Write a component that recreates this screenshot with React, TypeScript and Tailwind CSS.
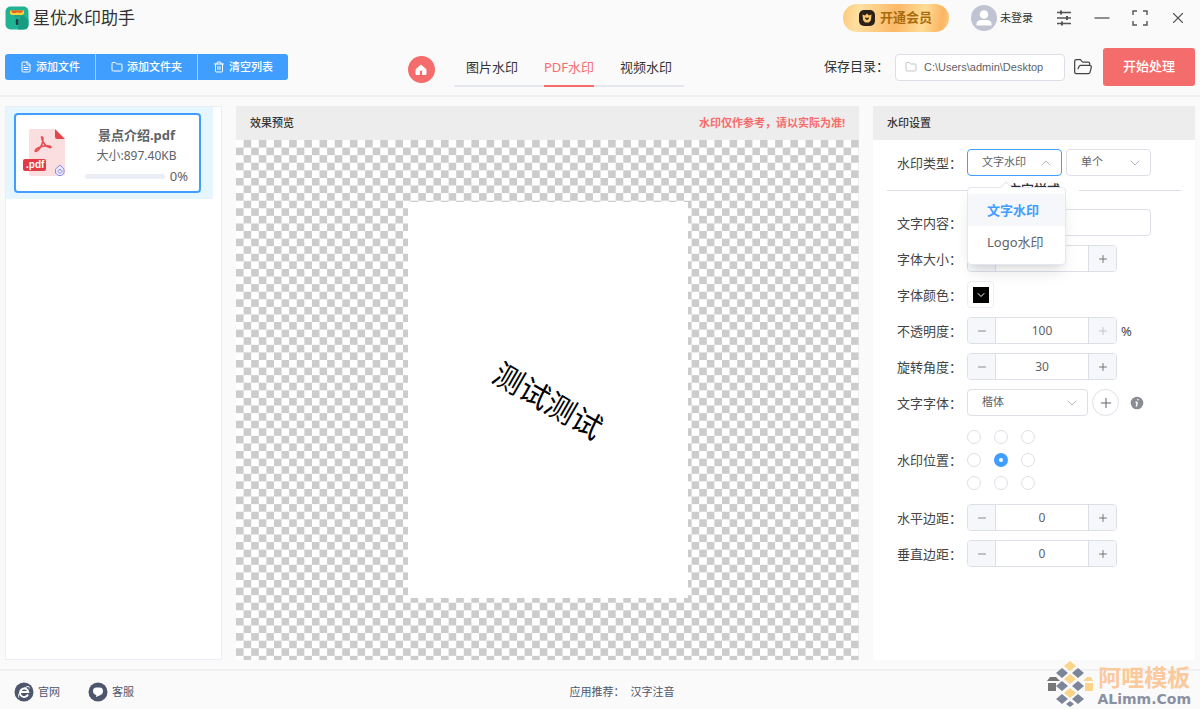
import { useState, type ReactNode } from "react";
import { ChevronDown, ChevronUp, FileText, Folder, FolderOpen, Minus, Plus, Trash2, X } from "lucide-react";
import clsx from "clsx";

function AppLogo() {
  return (
    <svg viewBox="0 0 24 24" className="h-6 w-6">
      <rect x="0.5" y="0.5" width="23" height="23" rx="5" fill="#1fb394" />
      <path d="M13 15l4-7 6.500 6v5a4.500 4.500 0 0 1-4.500 4.500h-6z" fill="#179c81" />
      <path d="M5 4.500h14v3l-1.500 1.500h-11L5 7.500z" fill="#f9d235" />
      <path d="M6 4.500h12l-1 2c-2 1-3-.5-5 0s-4 1-5 0z" fill="#ea5b2b" />
      <path d="M9 9h6l-1.500 2.500h-3z" fill="#2a9d84" />
      <rect x="10.800" y="13" width="2.400" height="6" rx="1" fill="#1d3c45" />
    </svg>
  );
}

function VipIcon() {
  return (
    <svg viewBox="0 0 18 18" className="h-[18px] w-[18px]">
      <rect x="1" y="1" width="16" height="16" rx="5" fill="#2b2118" />
      <path d="M4.500 5.500l2.500 1 2-2 2 2 2.500-1-.5 5.500-2 2.500H7L5 11z" fill="#fbc671" />
      <path d="M7.300 8.700L9 10.400l1.700-1.700" fill="none" stroke="#2b2118" strokeWidth="1.300" />
    </svg>
  );
}

function Avatar() {
  return (
    <svg viewBox="0 0 26 26" className="h-[26px] w-[26px]">
      <circle cx="13" cy="13" r="13" fill="#c0c4d2" />
      <circle cx="13" cy="9.500" r="4.300" fill="#fff" />
      <path d="M5.500 20.500v-1.500c0-3 3-4 4.500-4h6c1.500 0 4.500 1 4.500 4v1.500z" fill="#fff" />
    </svg>
  );
}

function SettingsIcon() {
  return (
    <svg viewBox="0 0 16 16" className="h-4 w-4" fill="none" stroke="#555" strokeWidth="1.300">
      <path d="M1 2.500h14M1 8h14M1 13.500h14" />
      <path d="M5 .5v4M11 6v4M6 11.500v4" strokeWidth="2" />
    </svg>
  );
}

function PdfIcon() {
  return (
    <svg viewBox="0 0 44 50" className="h-[50px] w-11">
      <path d="M8 1h23l11 11v34a2 2 0 0 1-2 2H8a2 2 0 0 1-2-2V3a2 2 0 0 1 2-2z" fill="#fbdfe0" />
      <path d="M32 1l10 10H34a2 2 0 0 1-2-2z" fill="#e8454b" />
      <path
        d="M18.500 9c2-.5 1.500 3 .5 7-1 3-4 7-6 7.500-1.500 0-1-2 2-3.500s8-2.500 11-2 2 2 .5 1.500C23 19 19 14 18.500 9z"
        fill="none"
        stroke="#ea4a50"
        strokeWidth="1.600"
      />
      <rect y="31" width="23" height="12" rx="2" fill="#e33b43" />
      <text x="3" y="40" fontSize="10" fontWeight="700" fill="#fff" fontFamily="Liberation Sans, sans-serif">.pdf</text>
      <path d="M37 37l4 4v4l-2.500 2.500h-3.500L32.500 45v-4z" fill="#e7e6fa" stroke="#8b8fe0" />
      <path d="M35 43.500l2-2.500 2 2.500-2 2z" fill="none" stroke="#8b8fe0" />
    </svg>
  );
}

function BrowserIcon() {
  return (
    <svg viewBox="0 0 20 20" className="h-5 w-5">
      <circle cx="10" cy="10" r="9.500" fill="#4d566d" />
      <path d="M14 12.500a4.200 4.200 0 1 1 .3-2.500H7" fill="none" stroke="#fff" strokeWidth="1.900" />
      <path d="M5 15.500c-2-1.500 2-9.500 9-11 1.500 0 1.500 1 1 2" fill="none" stroke="#fff" strokeWidth="1" />
    </svg>
  );
}

function ChatIcon() {
  return (
    <svg viewBox="0 0 20 20" className="h-5 w-5">
      <circle cx="10" cy="10" r="9.500" fill="#4d566d" />
      <path d="M8.500 5.500h3c2.500 0 3.500 1.500 3.500 3.500s-1 3.500-3.500 4.500L8 15l.3-2C6 12.500 5 11 5 9c0-2 1.200-3.500 3.500-3.500z" fill="#fff" />
    </svg>
  );
}

function SiteMark() {
  return (
    <svg viewBox="0 0 46 48" className="h-12 w-[46px]">
      <g fill="#fbd488">
        <path d="M23 0l6 5-6 5-6-5zM23 13l6 5-6 5-6-5zM23 27l6 5-6 5-6-5z" />
        <path d="M36 20l4-4h4l2 4zM38 22h8v8h-8z" />
      </g>
      <g fill="#7d8599">
        <path d="M15 7l6 5-6 5-6-5zM31 7l6 5-6 5-6-5zM15 20l6 5-6 5-6-5zM31 20l6 5-6 5-6-5zM15 33l6 5-6 5-6-5zM31 33l6 5-6 5-6-5zM23 40l4 3-4 3-4-3z" />
        <path d="M0 20l3-4h6l4 4z" fill="#777" />
        <path d="M1 22h8v8H1z" fill="#777" />
      </g>
    </svg>
  );
}

function Field({ label, htmlFor, children }: { label: string; htmlFor: string; children: ReactNode }) {
  return (
    <div className="flex items-center">
      <label htmlFor={htmlFor} className="w-[70px] shrink-0 whitespace-nowrap text-[13px] leading-5 text-[#444]">
        {label}
      </label>
      {children}
    </div>
  );
}

function NumberField({ id, value, max }: { id: string; value: number; max?: number }) {
  const [current, setCurrent] = useState(value);
  const atMax = max !== undefined && current >= max;

  return (
    <div className="flex h-[27px] w-[150px] overflow-hidden rounded border border-[#dcdfe6] bg-white">
      <button
        type="button"
        aria-label="减少"
        onClick={() => setCurrent(current - 1)}
        className="flex w-7 shrink-0 items-center justify-center border-r border-[#dcdfe6] bg-[#f5f7fa] text-[#888]"
      >
        <Minus className="h-3 w-3" strokeWidth={2} />
      </button>
      <input
        id={id}
        inputMode="numeric"
        value={current}
        onChange={(e) => setCurrent(Number(e.target.value) || 0)}
        className="w-full min-w-0 bg-white text-center text-[12px] text-[#606266] outline-none"
      />
      <button
        type="button"
        aria-label="增加"
        disabled={atMax}
        onClick={() => setCurrent(current + 1)}
        className={clsx(
          "flex w-7 shrink-0 items-center justify-center border-l border-[#dcdfe6] bg-[#f5f7fa]",
          atMax ? "text-[#c0c4cc]" : "text-[#777]"
        )}
      >
        <Plus className="h-3 w-3" strokeWidth={2} />
      </button>
    </div>
  );
}

const positions = ["左上", "中上", "右上", "左中", "居中", "右中", "左下", "中下", "右下"];

const fileActions = [
  { label: "添加文件", icon: FileText },
  { label: "添加文件夹", icon: Folder },
  { label: "清空列表", icon: Trash2 },
];

const tabs = ["图片水印", "PDF水印", "视频水印"];

const selectClass =
  "block h-[27px] w-full appearance-none rounded border bg-white pl-[14px] pr-6 text-[11px] text-[#606266] outline-none";

const chevronClass = "pointer-events-none absolute right-2 top-[6px] h-4 w-4 text-[#b4b8c0]";

function TitleBar() {
  return (
    <header className="flex h-9 items-center justify-between pl-[5px] pr-[13px]">
      <div className="flex items-center gap-1">
        <AppLogo />
        <h1 className="text-[17px] leading-6 text-[#333]">星优水印助手</h1>
      </div>
      <div className="flex items-center">
        <button
          type="button"
          className="flex h-7 w-[106px] items-center gap-1 rounded-full bg-[linear-gradient(100deg,#f9c97c,#ffe0a0_15%,#fbb868_50%,#ffdc95_75%,#fbb563_92%,#fdcb80)] pl-[15px] text-[13px] font-bold text-[#a96c0c]"
        >
          <VipIcon />
          开通会员
        </button>
        <button type="button" className="ml-[22px] flex items-center gap-[3px] text-[11px] text-[#333]">
          <Avatar />
          未登录
        </button>
        <div className="ml-[23px] flex items-center gap-[21px] text-[#555]">
          <button type="button" aria-label="设置"><SettingsIcon /></button>
          <button type="button" aria-label="最小化">
            <svg viewBox="0 0 18 18" className="h-[18px] w-[18px]" fill="none" stroke="currentColor" strokeWidth="1.300">
              <path d="M1.500 9h15" />
            </svg>
          </button>
          <button type="button" aria-label="最大化">
            <svg viewBox="0 0 16 16" className="h-4 w-4" fill="none" stroke="currentColor" strokeWidth="1.400">
              <path d="M1 5V1h4M11 1h4v4M15 11v4h-4M5 15H1v-4" />
            </svg>
          </button>
          <button type="button" aria-label="关闭"><X className="h-[18px] w-[18px]" strokeWidth={1.5} /></button>
        </div>
      </div>
    </header>
  );
}

function Toolbar() {
  return (
    <div className="flex h-[61px] items-start justify-between border-b-2 border-[#efefef] px-[5px] pt-3">
      <div className="mt-[6px] flex divide-x divide-[#a3d0ff] overflow-hidden rounded-[3px] bg-[#409eff]">
        {fileActions.map(({ label, icon: Icon }) => (
          <button key={label} type="button" className="flex h-[26px] items-center gap-1 px-[15px] text-[11px] font-medium text-white">
            <Icon className="h-3 w-3" />
            {label}
          </button>
        ))}
      </div>

      <nav className="flex pr-5">
        <a href="#home" aria-label="首页" className="mt-2 mr-[19px] flex h-[27px] w-[27px] items-center justify-center rounded-full bg-[#f56c6c]">
          <svg viewBox="0 0 12 12" className="h-3 w-3">
            <path d="M6 1l5 4.500v5H7.500v-3a1.500 1.500 0 0 0-3 0v3H1v-5z" fill="#fff" stroke="#fff" strokeLinejoin="round" />
          </svg>
        </a>
        <div className="flex h-[39px] gap-[26px] border-b-2 border-[#e4e7ed] px-3">
          {tabs.map((tab) => (
            <a
              key={tab}
              href="#tab"
              className={clsx(
                "h-[39px] border-b-2 text-[13px] leading-[38px]",
                tab === "PDF水印" ? "border-[#f56c6c] text-[#f56c6c]" : "border-transparent text-[#333]"
              )}
            >
              {tab}
            </a>
          ))}
        </div>
      </nav>

      <div className="flex items-center">
        <label htmlFor="save-dir" className="mr-[6px] text-[13px] text-[#333]">保存目录：</label>
        <div className="flex h-[27px] w-[170px] items-center gap-[7px] rounded border border-[#dcdfe6] bg-white pl-[9px]">
          <Folder className="h-3 w-3 shrink-0 text-[#c0c4cc]" />
          <input
            id="save-dir"
            defaultValue="C:\Users\admin\Desktop"
            className="w-full min-w-0 bg-transparent font-['Liberation_Sans',sans-serif] text-[11px] text-[#606266] outline-none"
          />
        </div>
        <button type="button" aria-label="打开目录" className="ml-2 mr-[10px] text-[#444]">
          <FolderOpen className="h-5 w-5" strokeWidth={1.5} />
        </button>
        <button type="button" className="h-[38px] w-[92px] rounded-[3px] bg-[#f56c6c] text-[13px] font-medium text-white">
          开始处理
        </button>
      </div>
    </div>
  );
}

function FileList() {
  return (
    <aside className="w-[217px] shrink-0 border border-[#ebeef5] bg-white">
      <div className="mr-2 bg-[#e6f6ff] py-[6px] pl-2 pr-3">
        <div className="flex h-20 items-center rounded border-2 border-[#409eff] bg-white pl-[7px]">
          <PdfIcon />
          <div className="ml-[18px] w-[103px] pt-1 text-[#606266]">
            <div className="text-center text-[13px] font-bold leading-5">景点介绍.pdf</div>
            <div className="text-center text-[12px] leading-[22px]">大小:897.40KB</div>
            <div className="flex items-center gap-[5px] text-[13px] leading-[18px]">
              <div className="h-[5px] flex-1 rounded-full bg-[#ebeef5]" />
              0%
            </div>
          </div>
        </div>
      </div>
    </aside>
  );
}

function Preview() {
  return (
    <section className="flex min-w-0 flex-1 flex-col">
      <div className="flex h-[34px] items-center justify-between bg-[#ededed] px-[14px] text-[11px] font-bold">
        <h2 className="font-medium text-[#333]">效果预览</h2>
        <span className="text-[#f56c6c]">水印仅作参考，请以实际为准!</span>
      </div>
      <div className="flex flex-1 items-center justify-center bg-white bg-[conic-gradient(#ccc_25%,#fff_0_50%,#ccc_0_75%,#fff_0)] bg-[length:calc(100%/41)_calc(400%/137)]">
        <div className="flex h-[396px] w-[280px] items-center justify-center bg-white">
          <span className="rotate-30 whitespace-nowrap text-[30px] text-black">测试测试</span>
        </div>
      </div>
    </section>
  );
}

function SettingsPanel() {
  return (
    <section className="w-[322px] shrink-0 bg-white">
      <div className="flex h-[34px] items-center bg-[#ededed] px-[14px]">
        <h2 className="text-[11px] font-medium text-[#333]">水印设置</h2>
      </div>

      <div className="pl-6 pt-[9px]">
        <Field label="水印类型：" htmlFor="mark-type">
          <div className="relative w-[95px]">
            <select id="mark-type" className={clsx(selectClass, "border-[#409eff]")}>
              <option>文字水印</option>
              <option>Logo水印</option>
            </select>
            <ChevronUp className={chevronClass} strokeWidth={1.5} />
            <div className="absolute left-0 top-[38px] z-10 w-[99px] rounded border border-[#e4e7ed] bg-white py-[6px] shadow-lg">
              <span className="absolute -top-[5px] left-[34px] h-2 w-2 rotate-45 border-l border-t border-[#e4e7ed] bg-white" />
              <ul role="listbox" aria-label="水印类型" className="relative text-[13px] leading-8">
                <li role="option" aria-selected="true" className="bg-[#f5f7fa] pl-[19px] font-bold text-[#409eff]">文字水印</li>
                <li role="option" aria-selected="false" className="pl-[19px] text-[#606266]">Logo水印</li>
              </ul>
            </div>
          </div>
          <div className="relative ml-1 w-[85px]">
            <select aria-label="水印数量" className={clsx(selectClass, "border-[#dcdfe6]")}>
              <option>单个</option>
              <option>平铺</option>
            </select>
            <ChevronDown className={chevronClass} strokeWidth={1.5} />
          </div>
        </Field>
      </div>

      <div className="mx-[14px] mb-[5px] flex h-7 items-center gap-[19px] text-[13px] font-medium text-[#303133]">
        <span className="h-px flex-1 bg-[#dcdfe6]" />
        文字样式
        <span className="h-px flex-1 bg-[#dcdfe6]" />
      </div>

      <div className="flex flex-col gap-[9px] pl-6">
        <Field label="文字内容：" htmlFor="mark-text">
          <input id="mark-text" defaultValue="测试测试" className="h-[27px] w-[184px] rounded border border-[#dcdfe6] bg-white px-[14px] text-[11px] text-[#606266] outline-none" />
        </Field>
        <Field label="字体大小：" htmlFor="font-size">
          <NumberField id="font-size" value={30} />
        </Field>
        <Field label="字体颜色：" htmlFor="font-color">
          <button id="font-color" type="button" aria-label="字体颜色" className="flex h-[27px] w-[27px] items-center justify-center rounded border border-[#ebeef5] bg-white">
            <span className="flex h-4 w-4 items-center justify-center bg-black text-white">
              <ChevronDown className="h-3 w-3" />
            </span>
          </button>
        </Field>
        <Field label="不透明度：" htmlFor="opacity">
          <NumberField id="opacity" value={100} max={100} />
          <span className="ml-1 text-[13px] leading-5 text-[#444]">%</span>
        </Field>
        <Field label="旋转角度：" htmlFor="angle">
          <NumberField id="angle" value={30} />
        </Field>
        <Field label="文字字体：" htmlFor="font-name">
          <div className="relative w-[121px]">
            <select id="font-name" className={clsx(selectClass, "border-[#dcdfe6]")}>
              <option>楷体</option>
              <option>宋体</option>
            </select>
            <ChevronDown className={chevronClass} strokeWidth={1.5} />
          </div>
          <button type="button" aria-label="添加字体" className="ml-1 flex h-[27px] w-[27px] items-center justify-center rounded-full border border-[#dcdfe6] bg-white text-[#606266]">
            <Plus className="h-4 w-4" strokeWidth={1.5} />
          </button>
          <svg viewBox="0 0 14 14" className="ml-[11px] h-[14px] w-[14px]">
            <circle cx="7" cy="7" r="6.300" fill="#8a8c93" />
            <path d="M8 3l-.3 1.300M7.300 5.800L6.300 10.500M5.500 6.200h1.500" stroke="#fff" strokeWidth="1.400" fill="none" />
          </svg>
        </Field>
        <Field label="水印位置：" htmlFor="position-4">
          <div className="grid grid-cols-3 gap-x-[13px] gap-y-[9px] py-[5px]">
            {positions.map((name, i) => (
              <input
                key={name}
                id={`position-${i}`}
                type="radio"
                name="position"
                aria-label={name}
                defaultChecked={i === 4}
                className="h-[14px] w-[14px] appearance-none rounded-full border border-[#dcdfe6] bg-white checked:border-5 checked:border-[#409eff]"
              />
            ))}
          </div>
        </Field>
        <Field label="水平边距：" htmlFor="margin-x">
          <NumberField id="margin-x" value={0} />
        </Field>
        <Field label="垂直边距：" htmlFor="margin-y">
          <NumberField id="margin-y" value={0} />
        </Field>
      </div>
    </section>
  );
}

function Footer() {
  return (
    <footer className="relative grid h-10 grid-cols-3 items-center border-t-2 border-[#f0f0f0] pt-1 text-[11px] text-[#4d566d]">
      <div className="flex items-center gap-7 pl-[14px]">
        <a href="#site" className="flex items-center gap-1"><BrowserIcon />官网</a>
        <a href="#service" className="flex items-center gap-1"><ChatIcon />客服</a>
      </div>
      <div className="flex justify-center gap-[6px] pl-11">
        <span>应用推荐：</span>
        <a href="#pinyin">汉字注音</a>
      </div>
      <div className="absolute bottom-0 right-[9px] flex items-center gap-1 font-bold">
        <SiteMark />
        <div className="flex flex-col items-center">
          <span className="text-[23px] leading-7 text-[#fac99c]">阿哩模板</span>
          <span className="font-['DejaVu_Sans',sans-serif] text-[14px] leading-4 text-[#8a90a0]">ALimm.Com</span>
        </div>
      </div>
    </footer>
  );
}

export default function App() {
  return (
    <div className="flex min-h-screen flex-col bg-[#fafafa] font-['Noto_Sans','Noto_Sans_CJK_SC',sans-serif]">
      <TitleBar />
      <Toolbar />
      <main className="flex flex-1 gap-[14px] px-[5px] py-[9px]">
        <FileList />
        <Preview />
        <SettingsPanel />
      </main>
      <Footer />
    </div>
  );
}
